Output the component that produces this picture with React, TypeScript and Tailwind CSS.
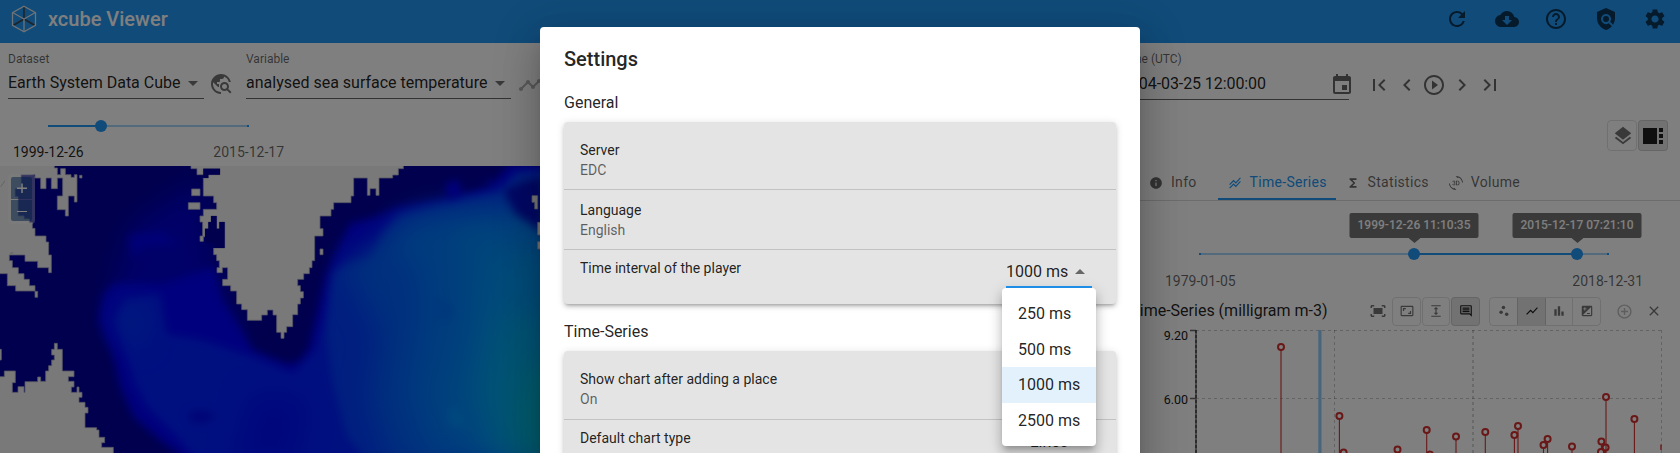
import React from "react";
import {
  Md3dRotation,
  MdAddCircleOutline,
  MdArrowDropDown,
  MdArrowDropUp,
  MdAspectRatio,
  MdBarChart,
  MdChevronLeft,
  MdChevronRight,
  MdClose,
  MdCloudDownload,
  MdOutlineComment,
  MdEvent,
  MdExpand,
  MdIso,
  MdFirstPage,
  MdFitScreen,
  MdFunctions,
  MdHelpOutline,
  MdInfo,
  MdLastPage,
  MdLayers,
  MdPlayCircleOutline,
  MdPolicy,
  MdRefresh,
  MdScatterPlot,
  MdSettings,
  MdShowChart,
  MdStackedLineChart,
  MdTimeline,
  MdTravelExplore,
  MdViewSidebar,
} from "react-icons/md";

function Logo() {
  return (
    <svg className="h-[28px] w-[26px]" viewBox="0 0 26 28" fill="none" strokeWidth="1.3">
      <path d="M13 14V1M13 14L2 20.5M13 14L24 20.5" stroke="#3c4650" strokeWidth="1.6" />
      <path d="M13 1.2L24.5 7.6V20.4L13 26.8L1.5 20.4V7.6Z" stroke="#dfe6ec" />
      <path d="M13 14V26M13 14L2 7.8M13 14L24 7.8" stroke="#dfe6ec" />
    </svg>
  );
}

function Header() {
  return (
    <header className="flex h-[43px] items-center bg-[#2196f3] pl-[11px] pr-[13px]">
      <div className="-mt-[5px] flex flex-1 items-center">
        <Logo />
        <h1 className="ml-[11px] text-[20px] leading-6 font-medium text-white">xcube Viewer</h1>
      </div>
      <div className="-mt-[5px] flex items-center gap-[25.4px] text-black/65">
        <MdRefresh size={24} />
        <MdCloudDownload size={24} />
        <MdHelpOutline size={24} />
        <MdPolicy size={24} />
        <MdSettings size={24} />
      </div>
    </header>
  );
}

function SelectField({ label, value, className }: { label: string; value: string; className: string }) {
  return (
    <div className={className}>
      <div className="h-4 text-[12px] leading-4 text-black/60">{label}</div>
      <div className="mt-[6px] flex h-[26px] items-start justify-between border-b border-black/60">
        <span className="text-[16px] leading-5 whitespace-nowrap text-black/87">{value}</span>
        <MdArrowDropDown size={24} className="mr-[-1px] -mt-[2px] shrink-0 text-black/55" />
      </div>
    </div>
  );
}

function MainToolbar() {
  return (
    <div className="h-[123px] pt-2 pl-2">
      <div className="flex">
        <SelectField label="Dataset" value="Earth System Data Cube" className="w-[196px] shrink-0" />
        <MdTravelExplore size={24} className="mt-[21px] ml-[5px] shrink-0 text-black/55" />
        <SelectField label="Variable" value="analysed sea surface temperature" className="ml-[13px] w-[265px] shrink-0" />
        <MdTimeline size={24} className="mt-[22px] ml-[7px] shrink-0 text-black/30" />
      </div>
      <div className="mt-[20px] ml-[40px] h-3 w-[201px]">
        <div className="relative top-[6px] h-[2px] bg-[#a6d5fa]">
          <div className="h-full w-[52px] bg-[#2196f3]" />
          <div className="absolute top-0 right-0 h-[2px] w-[2px] bg-[#2196f3]" />
          <div className="absolute -top-[5px] left-[47px] h-3 w-3 rounded-full bg-[#2196f3]" />
        </div>
      </div>
      <div className="mt-[11px] ml-[5px] flex w-[271px] justify-between text-[14px] leading-5">
        <span className="text-black/87">1999-12-26</span>
        <span className="text-black/60">2015-12-17</span>
      </div>
    </div>
  );
}

function SeaMap() {
  return (
    <div className="relative h-[287px] w-[540px] overflow-hidden">
      <svg className="block h-[287px] w-[540px]" viewBox="0 18 1620 861">
        <defs>
          <filter id="b1" x="-20%" y="-20%" width="140%" height="140%" colorInterpolationFilters="sRGB">
            <feGaussianBlur stdDeviation="13" />
          </filter>
          <filter id="b2" x="-30%" y="-30%" width="160%" height="160%" colorInterpolationFilters="sRGB">
            <feGaussianBlur stdDeviation="42" />
          </filter>
        </defs>
        <rect y="18" width="1620" height="861" fill="#00009c" />
        <g filter="url(#b2)">
          <path d="M400 190L600 60L640 330L720 520L560 560L360 540L330 450L350 340Z" fill="#0000d2" />
        </g>
        <g filter="url(#b1)">
          <path d="M385 225L480 215L540 250L430 262L400 300Z" fill="#0000f0" />
          <path d="M296 475L312 400L345 370L490 372L640 320L665 420L720 500L760 570L860 612L895 606L925 570L955 440L975 350L1000 290L1050 190L1130 170L1190 140L1330 115L1490 60L1530 10L1650 0V900H560L480 840L400 770L360 680L340 590L310 520Z" fill="#0000fc" />
          <path d="M345 480L375 420L480 400L500 520L610 540L760 590L880 640L945 570L975 460L1000 350L1030 300L1110 300L1150 215L1190 160L1330 130L1500 95L1540 40L1640 30V900H590L510 810L440 740L400 660L375 570Z" fill="#0020ff" />
          <path d="M1000 330L1110 300L1150 220L1200 170L1340 135L1500 95L1550 35L1640 30V900H1100L1040 830L1000 680L980 530L985 400Z" fill="#003eff" />
        </g>
        <g filter="url(#b2)">
          <path d="M360 440L420 410L440 500L420 560L370 540Z" fill="#0038ff" />
          <path d="M1030 310L1150 240L1250 160L1500 120L1680 80V920H1170L1110 720L1140 520Z" fill="#0060fc" />
          <path d="M1150 250L1250 165L1680 140V920H1290L1220 700L1260 470L1250 320Z" fill="#0078fc" />
          <path d="M1370 180L1680 200V920H1430L1320 720L1380 510Z" fill="#0088f8" />
          <path d="M1480 280L1700 280V920H1480L1410 700Z" fill="#0098f4" />
          <path d="M1500 480L1700 440V930H1520L1450 690Z" fill="#00a8ea" />
          <path d="M1570 640L1720 560V940H1600L1540 790Z" fill="#00b8d8" />
          <path d="M760 700L920 720L880 920H700Z" fill="#000efa" />
        </g>
        <g filter="url(#b1)">
          <path d="M1510 90L1580 60L1630 50V220L1590 190L1545 160Z" fill="#0010c8" />
          <path d="M1320 80L1440 45L1475 75L1400 90Z" fill="#0000a0" />
          <ellipse cx="1360" cy="87" rx="22" ry="26" fill="#0000ff" />
          <ellipse cx="602" cy="770" rx="38" ry="18" fill="#0008ec" />
          <path d="M1310 420L1350 430L1360 470L1320 480Z" fill="#0070f8" />
          <path d="M1340 740L1390 750L1410 800L1350 800Z" fill="#0090fc" />
        </g>
        <g fill="#f2f2f2" stroke="#a8a8c8" strokeWidth="2.4">
          <path d="M-3 15H163V24H172V44H182V26H196V44H213V52H223V44H231V126H223V108H205V168H196V149H172V108H188V54H172V86H154V54H138V86H122V54H105V44H63V86H45V110H54V168H72V177H88V188H97V205H105V228H138V246H146V285H154V338H146V323H113V304H75V285H28V302H37V323H55V341H72V358H88V377H105V394H113V412H105V393H47V377H22V341H-3Z" />
          <path d="M239 46H246V54H239ZM-3 568H4V600H-3Z" />
          <path d="M-3 650H13V633H46V668H37V697H54V680H72V697H75V665H113V651H122V664H137V633H146V617H155V600H163V585H155V568H163V550H172V568H187V633H222V650H205V664H222V681H214V697H231V681H237V697H246V712H237V727H255V742H264V759H255V803H290V810H297V832H314V848H305V862H340V882H-3Z" />
          <path d="M573 15V26H591V44H610V26H660V44H625V54H610V108H641V128H650V148H610V168H600V186H608V228H600V244H610V230H615V206H625V186H633V168H650V206H658V186H674V264H641V284H650V302H658V323H651V338H667V323H683V358H668V377H692V393H710V432H725V449H742V481H785V465H802V450H819V465H830V517H843V535H852V517H860V500H878V464H893V432H901V414H910V395H901V377H893V358H911V341H928V323H936V302H944V228H969V206H960V168H993V148H1001V128H1053V108H1061V54H1102V106H1110V86H1128V106H1137V54H1178V45H1195V26H1210V15Z" />
          <path d="M575 87H600V107H575ZM565 128H600V148H565ZM960 267H969V284H960ZM1596 107H1613V147H1604V127H1596ZM1613 187H1623V225H1613ZM1613 245H1623V267H1613Z" />
        </g>
        <path d="M610 26H660V44H625V54H610ZM615 206H625V186H633V168H650V206H658V186H674V264H641V250H615Z" fill="#00009c" />
        <path d="M2 80L10 70L14 62M30 280L40 278" stroke="#c8c8c8" strokeWidth="3" fill="none" />
      </svg>
      <div className="absolute top-2 left-2 flex flex-col gap-px rounded-[4px] bg-white/40 p-[3px]">
        <button className="flex h-[22px] w-[21px] items-center justify-center rounded-t-[2px] bg-[#003c88]/50">
          <svg className="h-3 w-3" viewBox="0 0 12 12" stroke="#fff" strokeWidth="1.5">
            <path d="M6 1.5V11M1 6.3H11" />
          </svg>
        </button>
        <button className="flex h-[21px] w-[21px] items-center justify-center rounded-b-[2px] bg-[#003c88]/50">
          <svg className="h-3 w-3" viewBox="0 0 12 12" stroke="#fff" strokeWidth="1">
            <path d="M1 6.5H11" />
          </svg>
        </button>
      </div>
    </div>
  );
}

function TimeToolbar() {
  return (
    <div className="flex h-[77px] pt-2 pl-[11px]">
      <div className="w-[228px]">
        <div className="h-4 text-[12px] leading-4 text-black/60">Time (UTC)</div>
        <div className="mt-[7px] h-[26px] border-b border-black/60 text-[16px] leading-5 tracking-[-0.08px] text-black/87">
          2004-03-25 12:00:00
        </div>
      </div>
      <div className="mt-[21.5px] flex h-6 items-center text-black/60">
        <MdEvent size={24} className="-ml-[19px]" />
        <MdFirstPage size={24} className="ml-[13px]" />
        <MdChevronLeft size={24} className="ml-[4px]" />
        <MdPlayCircleOutline size={24} className="ml-[3px]" />
        <MdChevronRight size={24} className="ml-[4px]" />
        <MdLastPage size={24} className="ml-[4px]" />
      </div>
    </div>
  );
}

function Tabs() {
  return (
    <nav className="flex h-[35px] border-b border-black/15 pl-[39px] text-[14px] leading-5 tracking-[0.3px] text-black/60">
      <div className="flex items-start">
        <MdInfo size={14} className="mt-[10px]" />
        <span className="mt-[6px] ml-[8px]">Info</span>
      </div>
      <div className="ml-[21px] flex w-[118px] items-start border-b-2 border-[#2196f3] pl-[10px] whitespace-nowrap text-[#2196f3]">
        <MdStackedLineChart size={14} className="mt-[10px]" />
        <span className="mt-[6px] ml-[8px]">Time-Series</span>
      </div>
      <div className="ml-[10px] flex items-start">
        <MdFunctions size={14} className="mt-[10px]" />
        <span className="mt-[6px] ml-[8px]">Statistics</span>
      </div>
      <div className="ml-[20px] flex items-start">
        <Md3dRotation size={14} className="mt-[10px]" />
        <span className="mt-[6px] ml-[8px]">Volume</span>
      </div>
    </nav>
  );
}

function Thumb({ label, className }: { label: string; className: string }) {
  return (
    <div className={className}>
      <div className="h-3 w-3 rounded-full bg-[#2196f3]" />
      <div className="absolute bottom-[22px] left-1/2 h-[25px] w-[129px] -translate-x-1/2 rounded-[2px] bg-[#757575] text-center text-[12px] leading-[24px] font-medium text-white">
        {label}
        <svg className="absolute top-[25px] left-[59px] h-[5px] w-3" viewBox="0 0 12 5" fill="#757575">
          <path d="M0 0H12L6 5Z" />
        </svg>
      </div>
    </div>
  );
}

function RangeSlider() {
  return (
    <div className="h-[94px] pt-[52px]">
      <div className="relative ml-[89px] h-[2px] w-[410px] bg-[#a6d5fa]">
        <div className="ml-[215px] h-full w-[163px] bg-[#2196f3]" />
        <div className="absolute top-0 left-0 h-[2px] w-[2px] bg-[#2196f3]" />
        <div className="absolute top-0 right-0 h-[2px] w-[2px] bg-[#2196f3]" />
        <Thumb label="1999-12-26 11:10:35" className="absolute -top-[5px] left-[209px]" />
        <Thumb label="2015-12-17 07:21:10" className="absolute -top-[5px] left-[372px]" />
      </div>
      <div className="mt-[16px] ml-[55px] flex w-[478px] justify-between text-[14px] leading-5 text-black/60">
        <span>1979-01-05</span>
        <span>2018-12-31</span>
      </div>
    </div>
  );
}

const box = "flex h-[29px] items-center justify-center rounded-[4px] border border-black/12";

function ChartHeader() {
  return (
    <div className="flex h-[31px] items-center pt-px text-black/55">
      <span className="w-[217.5px] text-right text-[16px] leading-5 whitespace-nowrap text-black/87">
        Time-Series (milligram m-3)
      </span>
      <div className="ml-[40.5px] flex w-[19px] justify-center">
        <MdFitScreen size={18} />
      </div>
      <div className={box + " ml-[5px] w-[29px]"}>
        <MdAspectRatio size={14} />
      </div>
      <div className={box + " ml-[1px] w-[28px]"}>
        <MdExpand size={14} />
      </div>
      <div className={box + " ml-[1px] w-[29px] bg-black/10 text-black/87"}>
        <MdOutlineComment size={14} />
      </div>
      <div className="ml-[9px] flex h-[29px] w-[112px] overflow-hidden rounded-[4px] border border-black/12">
        <div className="flex w-[27px] items-center justify-center">
          <MdScatterPlot size={14} />
        </div>
        <div className="flex w-[29px] items-center justify-center border-x border-black/12 bg-black/10 text-black/87">
          <MdShowChart size={14} />
        </div>
        <div className="flex w-[26px] items-center justify-center">
          <MdBarChart size={14} />
        </div>
        <div className="flex w-[28px] items-center justify-center border-l border-black/12">
          <MdIso size={14} />
        </div>
      </div>
      <MdAddCircleOutline size={17} className="ml-[15px] text-black/26" />
      <MdClose size={16} className="ml-[13px]" />
    </div>
  );
}

const points: [number, number][] = [
  [171, 21], [229.4, 90], [233.6, 126.5], [287.5, 123.5], [316.7, 104], [320, 128.5], [346, 110.5],
  [375.3, 106], [404.4, 109], [408, 100], [433.5, 119], [437.6, 113], [462, 120.5], [491.4, 115.5],
  [491, 126], [495.6, 121.5], [496, 71], [524.4, 93],
];

function Chart() {
  return (
    <svg className="block h-[127px] w-[570px]" viewBox="0 0 570 127">
      <g stroke="#000" strokeOpacity="0.22" strokeDasharray="3 3" fill="none">
        <path d="M86 4.5H551.5M86 72.5H551.5M224.5 4V127M551.5 4V127" />
        <path d="M363 4V127" strokeWidth="1.5" />
      </g>
      <path d="M80 4.5H86M80 72.5H86M86 4V127" stroke="#666" strokeWidth="1.4" />
      <path d="M86 4V127" stroke="#333" strokeWidth="1.2" strokeDasharray="3 2" />
      <g fill="#222" fontFamily="Roboto, sans-serif" fontSize="12.5" textAnchor="end">
        <text x="78" y="13.5">9.20</text>
        <text x="78" y="77.5">6.00</text>
      </g>
      <rect x="208.3" y="4" width="3.2" height="123" fill="#90caf9" />
      {points.map(([x, y], i) => (
        <g key={i} stroke="#d32f2f" fill="none">
          <path d={`M${x} ${y + 3}V127`} strokeWidth="1.1" />
          <circle cx={x} cy={y} r="3" strokeWidth="2" fill="#fff" />
        </g>
      ))}
      <path d="M551 118.5V124" stroke="#d32f2f" strokeWidth="1.4" />
    </svg>
  );
}

function RightPanel() {
  return (
    <section className="w-[570px]">
      <TimeToolbar />
      <div className="flex h-[46px] justify-end pr-[12px] text-black/55">
        <div className="mr-px flex h-[31px] w-[30px] items-center justify-center rounded-[4px] border border-black/12">
          <MdLayers size={22} className="ml-[2px]" />
        </div>
        <div className="flex h-[31px] w-[30px] items-center justify-center rounded-[4px] border border-black/12 bg-black/10 text-black/87">
          <MdViewSidebar size={24} />
        </div>
      </div>
      <Tabs />
      <RangeSlider />
      <ChartHeader />
      <Chart />
    </section>
  );
}

function SettingRow({ title, value, className }: { title: string; value?: string; className: string }) {
  return (
    <div className={className + " px-4 text-[14px]"}>
      <div className="leading-5 text-black/87">{title}</div>
      {value && <div className="leading-5 text-black/60">{value}</div>}
    </div>
  );
}

const card =
  "shrink-0 rounded-[4px] bg-[#e4e4e4] shadow-[0_3px_3px_-2px_rgba(0,0,0,0.2),0_3px_4px_0_rgba(0,0,0,0.14),0_1px_8px_0_rgba(0,0,0,0.12)]";

function SettingsDialog() {
  return (
    <div className="flex h-[560px] w-[600px] flex-col rounded-[4px] bg-white px-6 pt-5 text-black/87 shadow-[0_11px_15px_-7px_rgba(0,0,0,0.2),0_24px_38px_3px_rgba(0,0,0,0.14),0_9px_46px_8px_rgba(0,0,0,0.12)]">
      <h2 className="text-[20px] leading-6 font-medium">Settings</h2>
      <h3 className="mt-[22px] text-[16px] leading-5">General</h3>
      <div className={card + " mt-[9px] h-[182px] w-[552px]"}>
        <SettingRow title="Server" value="EDC" className="h-[68px] border-b border-black/15 pt-[18px]" />
        <SettingRow title="Language" value="English" className="h-[60px] border-b border-black/15 pt-[10px]" />
        <div className="flex justify-between">
          <SettingRow title="Time interval of the player" className="pt-[8px]" />
          <div className="mt-[12px] mr-6 flex h-[26px] w-[86px] justify-between border-b-2 border-[#2196f3]">
            <span className="text-[16px] leading-5 whitespace-nowrap">1000 ms</span>
            <MdArrowDropUp size={24} className="-mt-[2px] mr-px shrink-0 text-black/55" />
          </div>
        </div>
      </div>
      <h3 className="mt-[18px] text-[16px] leading-5">Time-Series</h3>
      <div className={card + " mt-[9px] h-[182px] w-[552px]"}>
        <SettingRow title="Show chart after adding a place" value="On" className="h-[69px] border-b border-black/15 pt-[18px]" />
        <div className="flex justify-between">
          <SettingRow title="Default chart type" className="pt-[8px]" />
          <span className="mt-[12px] mr-[48px] text-[16px] leading-5">Lines</span>
        </div>
      </div>
    </div>
  );
}

function IntervalMenu() {
  return (
    <ul className="w-[94px] rounded-[4px] bg-white pt-2 pb-[7px] text-[16px] leading-6 whitespace-nowrap text-black/87 shadow-[0_5px_5px_-3px_rgba(0,0,0,0.2),0_8px_10px_1px_rgba(0,0,0,0.14),0_3px_14px_2px_rgba(0,0,0,0.12)]">
      <li className="px-4 py-[6px]">250 ms</li>
      <li className="px-4 pt-[6px] pb-[5px]">500 ms</li>
      <li className="bg-[#e3f1fd] px-4 py-[6px]">1000 ms</li>
      <li className="px-4 py-[6px]">2500 ms</li>
    </ul>
  );
}

export default function App() {
  return (
    <div className="relative h-[453px] w-[1680px] overflow-hidden bg-white font-[Roboto,sans-serif]">
      <Header />
      <main className="flex">
        <section className="w-[1110px]">
          <MainToolbar />
          <SeaMap />
        </section>
        <RightPanel />
      </main>
      <div className="absolute inset-0 bg-black/50" />
      <div className="absolute top-[27px] left-[540px]">
        <SettingsDialog />
      </div>
      <div className="absolute top-[288px] left-[1002px]">
        <IntervalMenu />
      </div>
    </div>
  );
}
